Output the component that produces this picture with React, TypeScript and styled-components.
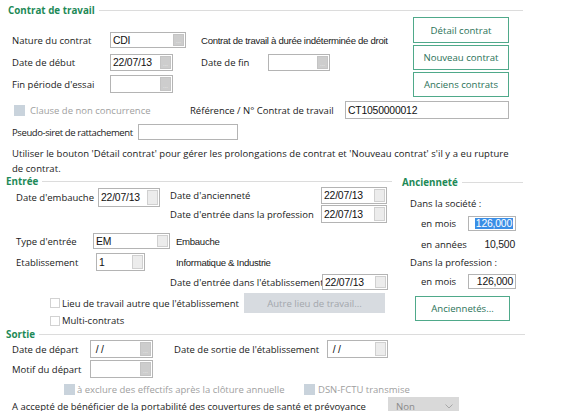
import React from 'react';
import styled, { createGlobalStyle, css } from 'styled-components';

const GlobalStyle = createGlobalStyle`
  html, body {
    margin: 0;
    padding: 0;
    background: #ffffff;
  }
  body {
    font-family: 'Open Sans', 'Noto Sans', sans-serif;
    font-size: 9.5px;
    color: #1a1a1a;
  }
`;

const Page = styled.div`
  width: 576px;
  height: 411px;
  overflow: hidden;
  background: #ffffff;
`;

const GroupHeader = styled.div<{ $left: number; $end: number; $height: number; $top?: number }>`
  display: flex;
  align-items: center;
  box-sizing: border-box;
  height: ${(p) => p.$height}px;
  padding-left: ${(p) => p.$left}px;
  padding-top: ${(p) => p.$top ?? 0}px;
  width: ${(p) => p.$end}px;
`;

const GroupTitle = styled.span`
  font-family: 'Open Sans', sans-serif;
  font-weight: 700;
  font-size: 9.8px;
  color: #1e8a57;
  margin-right: 4px;
  white-space: nowrap;
`;

const Rule = styled.div`
  flex: 1;
  height: 1px;
  background: #dcdcdc;
`;

const Row = styled.div<{ $h: number; $mt?: number; $pl?: number }>`
  display: flex;
  align-items: center;
  height: ${(p) => p.$h}px;
  margin-top: ${(p) => p.$mt ?? 0}px;
  padding-left: ${(p) => p.$pl ?? 0}px;
`;

const Label = styled.span<{ $w?: number; $disabled?: boolean; $tight?: boolean }>`
  display: inline-block;
  white-space: nowrap;
  ${(p) => p.$w !== undefined && css`width: ${p.$w}px; flex: none;`}
  ${(p) => p.$tight && css`letter-spacing: -0.4px;`}
  color: ${(p) => (p.$disabled ? '#a0a0a0' : '#1a1a1a')};
`;

const Plain = styled.span<{ $ml?: number }>`
  font-family: 'Liberation Sans', Arial, sans-serif;
  font-size: 9.6px;
  letter-spacing: -0.3px;
  white-space: nowrap;
  margin-left: ${(p) => p.$ml ?? 0}px;
  color: #1a1a1a;
`;

const FieldBox = styled.div<{ $w: number; $h: number; $ml?: number; $mt?: number }>`
  display: flex;
  align-items: center;
  box-sizing: border-box;
  width: ${(p) => p.$w}px;
  height: ${(p) => p.$h}px;
  margin-left: ${(p) => p.$ml ?? 0}px;
  margin-top: ${(p) => p.$mt ?? 0}px;
  flex: none;
  border: 1px solid #b4b4b4;
  background: #ffffff;
  padding: 0 2px;
`;

const FieldText = styled.span<{ $align?: 'left' | 'right' }>`
  flex: 1;
  font-family: 'Liberation Sans', Arial, sans-serif;
  font-size: 10.4px;
  letter-spacing: -0.2px;
  white-space: nowrap;
  text-align: ${(p) => p.$align ?? 'left'};
  color: #111;
`;

const Selected = styled.span`
  background: #3a8ee6;
  color: #ffffff;
  padding: 0 1px;
`;

const Ellipsis = styled.div<{ $light?: boolean }>`
  align-self: stretch;
  width: 11px;
  margin: 1px -1px 1px 2px;
  display: flex;
  align-items: flex-end;
  justify-content: center;
  box-sizing: border-box;
  border: 1px solid ${(p) => (p.$light ? '#d0d0d0' : '#c4c4c4')};
  background: ${(p) => (p.$light ? '#ececec' : '#cdcdcd')};
  &::after {
    content: '...';
    font-family: 'Liberation Sans', sans-serif;
    font-size: 6px;
    line-height: 8px;
    color: ${(p) => (p.$light ? '#ececec' : '#f2f2f2')};
  }
`;

const GreenButton = styled.div<{ $w: number; $h: number; $ml?: number; $mt?: number }>`
  display: flex;
  align-items: center;
  justify-content: center;
  box-sizing: border-box;
  width: ${(p) => p.$w}px;
  height: ${(p) => p.$h}px;
  margin-left: ${(p) => p.$ml ?? 0}px;
  margin-top: ${(p) => p.$mt ?? 0}px;
  border: 1.5px solid #4fa98a;
  background: #ffffff;
  color: #2b7258;
  font-size: 9.6px;
  white-space: nowrap;
`;

const GrayButton = styled.div<{ $w: number; $h: number }>`
  display: flex;
  align-items: center;
  justify-content: center;
  width: ${(p) => p.$w}px;
  height: ${(p) => p.$h}px;
  background: #d7dbe0;
  color: #a3a7ad;
  font-size: 9.6px;
  white-space: nowrap;
  flex: none;
`;

const Check = styled.span<{ $disabled?: boolean; $size?: number }>`
  display: inline-block;
  box-sizing: border-box;
  flex: none;
  width: ${(p) => p.$size ?? 11}px;
  height: ${(p) => p.$size ?? 11}px;
  border: 1px solid ${(p) => (p.$disabled ? '#c9d3dc' : '#d2d2d2')};
  background: ${(p) => (p.$disabled ? '#c9d3dc' : '#ffffff')};
`;

const CheckGroup = styled.div<{ $w?: number; $gap: number }>`
  display: flex;
  align-items: center;
  gap: ${(p) => p.$gap}px;
  ${(p) => p.$w !== undefined && css`width: ${p.$w}px; flex: none;`}
`;

const TopBlock = styled.div`
  display: flex;
`;

const TopLeft = styled.div`
  width: 413px;
  padding-top: 15px;
`;

const ButtonColumn = styled.div`
  display: flex;
  flex-direction: column;
  gap: 2px;
`;

const Info = styled.p`
  margin: 6px 0 0 12px;
  line-height: 15px;
  letter-spacing: 0.05px;
  white-space: nowrap;
`;

const Columns = styled.div`
  display: flex;
`;

const EntreeCol = styled.div`
  width: 396px;
  flex: none;
`;

const AncienneteCol = styled.div`
  width: 123px;
  margin-left: 6px;
`;

const Split = styled.div`
  display: flex;
`;

const SplitLeft = styled.div`
  display: flex;
  align-items: center;
  height: 19px;
  margin-top: 2px;
  padding-left: 16px;
  width: 154px;
  flex: none;
`;

const SplitRight = styled.div`
  display: flex;
  flex-direction: column;
  gap: 1px;
`;

const Value = styled.span<{ $w: number }>`
  width: ${(p) => p.$w}px;
  text-align: right;
  font-family: 'Liberation Sans', Arial, sans-serif;
  font-size: 10.4px;
  letter-spacing: -0.2px;
`;

const Select = styled.div<{ $w: number; $h: number }>`
  display: flex;
  align-items: center;
  justify-content: space-between;
  box-sizing: border-box;
  width: ${(p) => p.$w}px;
  height: ${(p) => p.$h}px;
  padding: 0 6px 0 8px;
  background: #d9d9d9;
  color: #8a8a8a;
  font-size: 9.6px;
  flex: none;
`;

type FieldProps = {
  w: number;
  h: number;
  value?: React.ReactNode;
  btn?: boolean;
  light?: boolean;
  align?: 'left' | 'right';
  ml?: number;
  mt?: number;
};

const Field = ({ w, h, value, btn = true, light, align, ml, mt }: FieldProps) => (
  <FieldBox $w={w} $h={h} $ml={ml} $mt={mt}>
    <FieldText $align={align}>{value}</FieldText>
    {btn && <Ellipsis $light={light} />}
  </FieldBox>
);

const Chevron = () => (
  <svg width="8" height="5" viewBox="0 0 8 5">
    <path d="M0.5 0.5 L4 4 L7.5 0.5" fill="none" stroke="#a8a8a8" strokeWidth="1" />
  </svg>
);

export default function App() {
  return (
    <Page>
      <GlobalStyle />

      <GroupHeader $left={8} $end={523} $height={17} $top={4}>
        <GroupTitle>Contrat de travail</GroupTitle>
        <Rule />
      </GroupHeader>

      <TopBlock>
        <TopLeft>
          <Row $h={16} $pl={12}>
            <Label $w={98}>Nature du contrat</Label>
            <Field w={76} h={16} value="CDI" />
            <Plain $ml={15}>Contrat de travail à durée indéterminée de droit</Plain>
          </Row>
          <Row $h={17} $mt={6} $pl={12}>
            <Label $w={98}>Date de début</Label>
            <Field w={63} h={17} value="22/07/13" />
            <Label $w={67} style={{ marginLeft: 28 }}>Date de fin</Label>
            <Field w={62} h={17} />
          </Row>
          <Row $h={18} $mt={4} $pl={12}>
            <Label $w={98}>Fin période d'essai</Label>
            <Field w={63} h={18} />
          </Row>
        </TopLeft>
        <ButtonColumn>
          <GreenButton $w={96} $h={26}>Détail contrat</GreenButton>
          <GreenButton $w={96} $h={25}>Nouveau contrat</GreenButton>
          <GreenButton $w={96} $h={25}>Anciens contrats</GreenButton>
        </ButtonColumn>
      </TopBlock>

      <Row $h={18} $mt={4} $pl={14}>
        <CheckGroup $w={176} $gap={5}>
          <Check $disabled />
          <Label $disabled>Clause de non concurrence</Label>
        </CheckGroup>
        <Label $w={155}>Référence / N° Contrat de travail</Label>
        <Field w={164} h={18} value="CT1050000012" btn={false} />
      </Row>

      <Row $h={16} $mt={5} $pl={12}>
        <Label $w={126} $tight>Pseudo-siret de rattachement</Label>
        <Field w={100} h={16} btn={false} />
      </Row>

      <Info>
        Utiliser le bouton 'Détail contrat' pour gérer les prolongations de contrat et 'Nouveau contrat' s'il y a eu rupture
        <br />
        de contrat.
      </Info>

      <Columns>
        <EntreeCol>
          <GroupHeader $left={6} $end={392} $height={10}>
            <GroupTitle>Entrée</GroupTitle>
            <Rule />
          </GroupHeader>
          <Split>
            <SplitLeft>
              <Label $w={82}>Date d'embauche</Label>
              <Field w={62} h={19} value="22/07/13" light />
            </SplitLeft>
            <SplitRight>
              <Row $h={18}>
                <Label $w={151}>Date d'ancienneté</Label>
                <Field w={66} h={17} value="22/07/13" light />
              </Row>
              <Row $h={18}>
                <Label $w={151}>Date d'entrée dans la profession</Label>
                <Field w={66} h={18} value="22/07/13" light />
              </Row>
            </SplitRight>
          </Split>
          <Row $h={16} $mt={10} $pl={16}>
            <Label $w={77}>Type d'entrée</Label>
            <Field w={77} h={16} value="EM" light />
            <Plain $ml={6}>Embauche</Plain>
          </Row>
          <Row $h={18} $mt={4} $pl={16}>
            <Label $w={80}>Etablissement</Label>
            <Field w={49} h={18} value="1" light />
            <Plain $ml={31}>Informatique &amp; Industrie</Plain>
          </Row>
          <Row $h={16} $mt={3} $pl={170}>
            <Label $w={152}>Date d'entrée dans l'établissement</Label>
            <Field w={66} h={16} value="22/07/13" light />
          </Row>
          <Row $h={20} $mt={3} $pl={50}>
            <CheckGroup $w={194} $gap={2}>
              <Check $size={10} />
              <Label>Lieu de travail autre que l'établissement</Label>
            </CheckGroup>
            <GrayButton $w={141} $h={20}>Autre lieu de travail...</GrayButton>
          </Row>
          <Row $h={11} $mt={2} $pl={50}>
            <CheckGroup $gap={2}>
              <Check $size={10} />
              <Label>Multi-contrats</Label>
            </CheckGroup>
          </Row>
        </EntreeCol>

        <AncienneteCol>
          <GroupHeader $left={0} $end={121} $height={12}>
            <GroupTitle>Ancienneté</GroupTitle>
            <Rule />
          </GroupHeader>
          <Row $h={14} $mt={8} $pl={8}>
            <Label>Dans la société :</Label>
          </Row>
          <Row $h={15} $mt={6} $pl={19}>
            <Label $w={47}>en mois</Label>
            <Field w={48} h={15} value={<Selected>126,000</Selected>} btn={false} align="right" />
          </Row>
          <Row $h={14} $mt={6} $pl={19}>
            <Label $w={47}>en années</Label>
            <Value $w={47}>10,500</Value>
          </Row>
          <Row $h={14} $mt={4} $pl={8}>
            <Label>Dans la profession :</Label>
          </Row>
          <Row $h={15} $mt={5} $pl={19}>
            <Label $w={47}>en mois</Label>
            <Field w={48} h={15} value="126,000" btn={false} align="right" />
          </Row>
          <GreenButton $w={95} $h={25} $ml={13} $mt={7}>Anciennetés...</GreenButton>
        </AncienneteCol>
      </Columns>

      <GroupHeader $left={6} $end={525} $height={12} $top={0} style={{ marginTop: 2 }}>
        <GroupTitle>Sortie</GroupTitle>
        <Rule />
      </GroupHeader>
      <Row $h={18} $pl={12}>
        <Label $w={78}>Date de départ</Label>
        <Field w={63} h={18} value="&nbsp;/ /" />
        <Label $w={153} style={{ marginLeft: 21 }}>Date de sortie de l'établissement</Label>
        <Field w={61} h={18} value="&nbsp;/ /" light />
      </Row>
      <Row $h={18} $mt={2} $pl={12}>
        <Label $w={78}>Motif du départ</Label>
        <Field w={63} h={18} />
      </Row>
      <Row $h={11} $mt={6} $pl={64}>
        <CheckGroup $w={240} $gap={2}>
          <Check $disabled />
          <Label $disabled>à exclure des effectifs après la clôture annuelle</Label>
        </CheckGroup>
        <CheckGroup $gap={3}>
          <Check $disabled />
          <Label $disabled>DSN-FCTU transmise</Label>
        </CheckGroup>
      </Row>
      <Row $h={18} $mt={2} $pl={12}>
        <Label $w={376}>A accepté de bénéficier de la portabilité des couvertures de santé et prévoyance</Label>
        <Select $w={71} $h={18}>
          <span>Non</span>
          <Chevron />
        </Select>
      </Row>
    </Page>
  );
}
